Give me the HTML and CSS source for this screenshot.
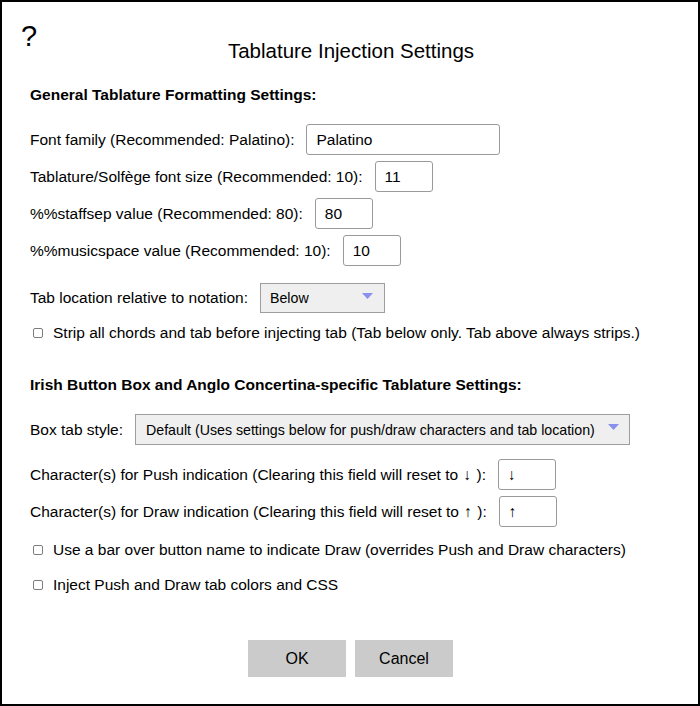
FILE: index.html
```html
<!DOCTYPE html>
<html>
<head>
<meta charset="utf-8">
<link rel="stylesheet" href="styles.css">
</head>
<body>
<div class="dialog">
  <span class="help">?</span>
  <div class="title">Tablature Injection Settings</div>

  <div class="section-head first">General Tablature Formatting Settings:</div>
  <div class="rows">
    <div class="row"><span class="label">Font family (Recommended: Palatino):</span><input class="field wide" type="text" value="Palatino"></div>
    <div class="row"><span class="label">Tablature/Solfège font size (Recommended: 10):</span><input class="field small" type="text" value="11"></div>
    <div class="row"><span class="label">%%staffsep value (Recommended: 80):</span><input class="field small" type="text" value="80"></div>
    <div class="row"><span class="label">%%musicspace value (Recommended: 10):</span><input class="field small" type="text" value="10"></div>
  </div>

  <div class="row select-row"><span class="label">Tab location relative to notation:</span><select class="dropdown loc"><option>Below</option><option>Above</option></select></div>
  <label class="check-row strip"><input type="checkbox" class="check">Strip all chords and tab before injecting tab (Tab below only. Tab above always strips.)</label>

  <div class="section-head second">Irish Button Box and Anglo Concertina-specific Tablature Settings:</div>
  <div class="row box-row"><span class="label">Box tab style:</span><select class="dropdown boxstyle"><option>Default (Uses settings below for push/draw characters and tab location)</option></select></div>
  <div class="rows chars">
    <div class="row"><span class="label">Character(s) for Push indication (Clearing this field will reset to <span class="arrow">↓</span> ):</span><input class="field small arrow-field" type="text" value="↓"></div>
    <div class="row"><span class="label">Character(s) for Draw indication (Clearing this field will reset to <span class="arrow">↑</span> ):</span><input class="field small arrow-field" type="text" value="↑"></div>
  </div>
  <label class="check-row bar"><input type="checkbox" class="check">Use a bar over button name to indicate Draw (overrides Push and Draw characters)</label>
  <label class="check-row inject"><input type="checkbox" class="check">Inject Push and Draw tab colors and CSS</label>

  <div class="buttons">
    <button class="btn">OK</button>
    <button class="btn">Cancel</button>
  </div>
</div>
</body>
</html>
```

FILE: styles.css
```css
html, body {
  margin: 0;
  padding: 0;
  background: #fff;
}
body {
  font-family: "Liberation Sans", Arial, Helvetica, sans-serif;
  color: #000;
}
.dialog {
  position: relative;
  box-sizing: border-box;
  width: 700px;
  height: 706px;
  border: 2px solid #000;
  padding: 37px 28px 0 28px;
  font-size: 15.5px;
}
.help {
  position: absolute;
  left: 19px;
  top: 17px;
  font-size: 29px;
  line-height: 34px;
}
.title {
  text-align: center;
  font-size: 20.5px;
  line-height: 24px;
  padding-left: 2px;
}
.section-head {
  font-weight: bold;
  line-height: 18px;
}
.section-head.first { margin-top: 23px; }
.section-head.second { margin-top: 34px; }
.rows {
  display: flex;
  flex-direction: column;
  gap: 6px;
  margin-top: 20px;
}
.row {
  display: flex;
  align-items: center;
  gap: 12px;
  line-height: 18px;
}
.arrow {
  font-weight: bold;
  padding: 0 1px;
}
.field {
  box-sizing: border-box;
  height: 31px;
  border: 1px solid #9a9a9a;
  border-radius: 3px;
  padding: 0 9px;
  font-family: "Liberation Sans", Arial, sans-serif;
  font-size: 15.5px;
  color: #000;
  background: #fff;
  outline: none;
}
.field.arrow-field { font-weight: bold; }
.field.wide { width: 194px; }
.field.small { width: 58px; }
.select-row { margin-top: 17px; }
.dropdown {
  appearance: none;
  -webkit-appearance: none;
  box-sizing: border-box;
  height: 30px;
  border: 1px solid #9d9d9d;
  border-radius: 0;
  background-color: #efefef;
  background-image: url("data:image/svg+xml;utf8,<svg xmlns='http://www.w3.org/2000/svg' width='11' height='6'><path d='M0 0 H11 L5.5 6 Z' fill='%238a90ee'/></svg>");
  background-repeat: no-repeat;
  background-position: right 11px top 9px;
  padding: 0 30px 0 9px;
  font-family: "Liberation Sans", Arial, sans-serif;
  font-size: 14.2px;
  color: #000;
}
.dropdown.loc { width: 125px; }
.dropdown.boxstyle { width: 495px; height: 31px; padding-left: 10px; }
.check-row {
  display: flex;
  align-items: center;
  line-height: 18px;
}
.check {
  appearance: none;
  -webkit-appearance: none;
  box-sizing: border-box;
  width: 10px;
  height: 10px;
  margin: 0 10px 0 3px;
  border: 1px solid #7d7d7d;
  border-radius: 2px;
  background: #fff;
}
.check-row.strip { margin-top: 11px; }
.box-row { margin-top: 20px; }
.box-row .dropdown { background-position: right 10px top 9px; }
.rows.chars { margin-top: 14px; }
.check-row.bar { margin-top: 14px; }
.check-row.inject { margin-top: 17px; }
.buttons {
  display: flex;
  justify-content: center;
  gap: 9px;
  margin-top: 46px;
  padding-left: 1px;
}
.btn {
  width: 98px;
  height: 37px;
  border: none;
  background: #cbcbcb;
  font-family: "Liberation Sans", Arial, sans-serif;
  font-size: 16px;
  color: #000;
  padding: 0;
}
```
